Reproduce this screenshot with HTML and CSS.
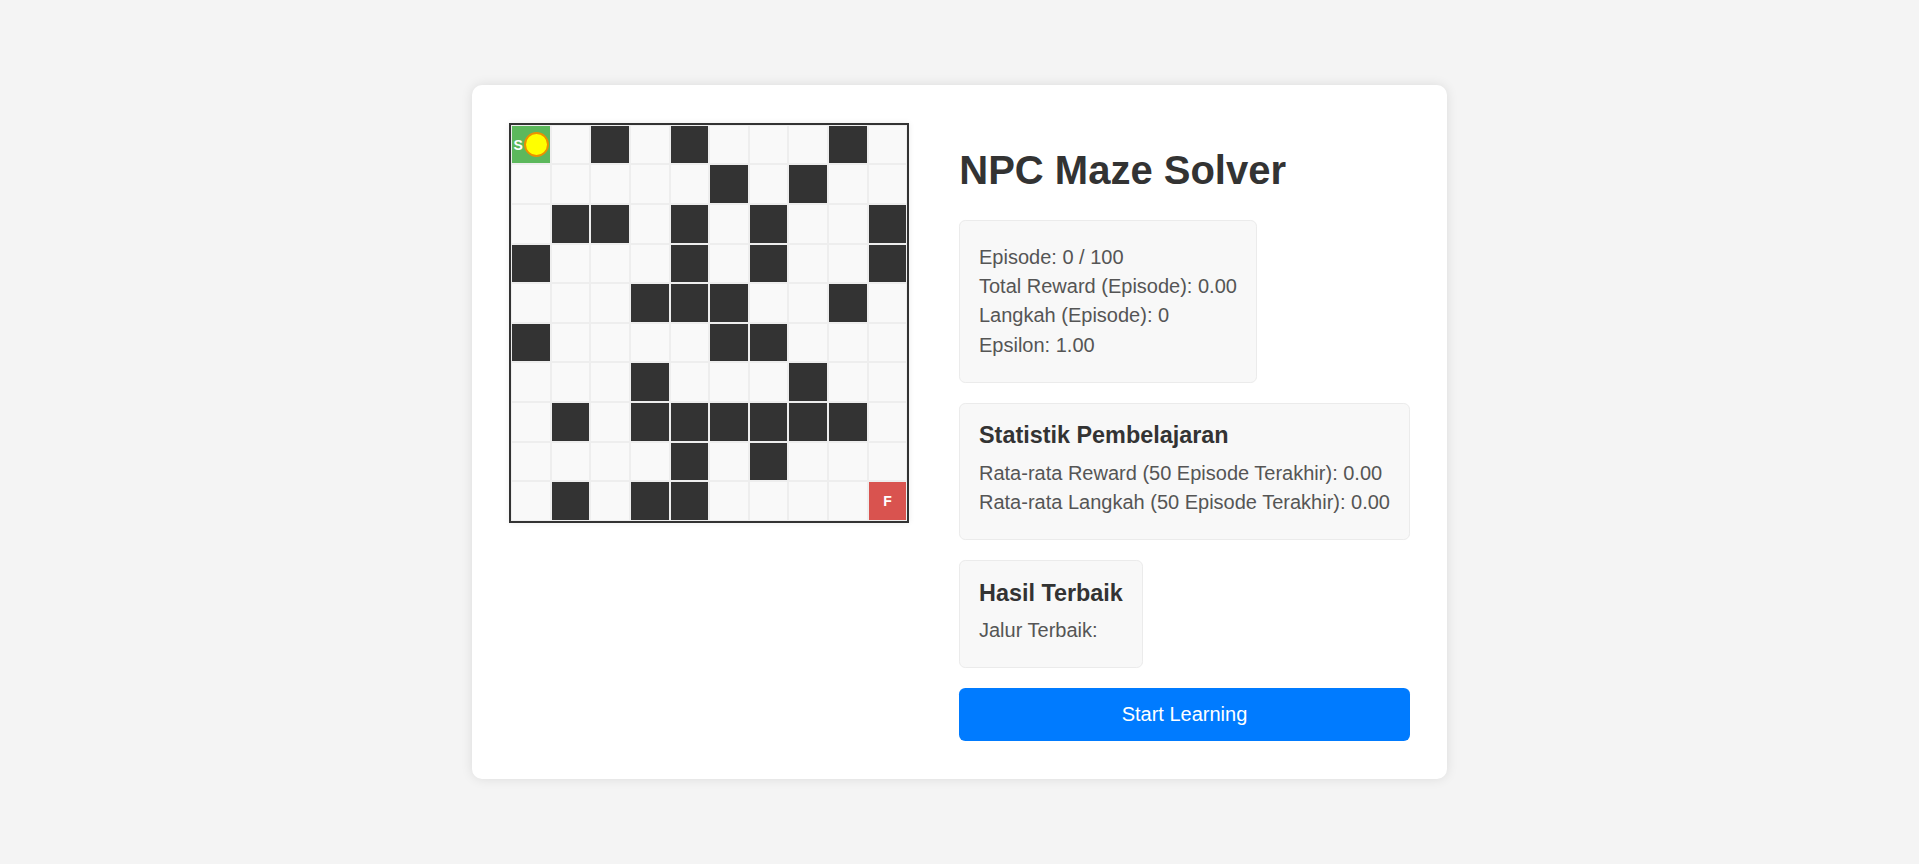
FILE: index.html
```html
<!DOCTYPE html>
<html lang="id">
<head>
<meta charset="utf-8">
<title>NPC Maze Solver</title>
<link rel="stylesheet" href="styles.css">
</head>
<body>
<div class="card">
  <div class="maze">
    <div class="cell start"><span class="label">S</span><span class="agent"></span></div><div class="cell"></div><div class="cell wall"></div><div class="cell"></div><div class="cell wall"></div><div class="cell"></div><div class="cell"></div><div class="cell"></div><div class="cell wall"></div><div class="cell"></div>
    <div class="cell"></div><div class="cell"></div><div class="cell"></div><div class="cell"></div><div class="cell"></div><div class="cell wall"></div><div class="cell"></div><div class="cell wall"></div><div class="cell"></div><div class="cell"></div>
    <div class="cell"></div><div class="cell wall"></div><div class="cell wall"></div><div class="cell"></div><div class="cell wall"></div><div class="cell"></div><div class="cell wall"></div><div class="cell"></div><div class="cell"></div><div class="cell wall"></div>
    <div class="cell wall"></div><div class="cell"></div><div class="cell"></div><div class="cell"></div><div class="cell wall"></div><div class="cell"></div><div class="cell wall"></div><div class="cell"></div><div class="cell"></div><div class="cell wall"></div>
    <div class="cell"></div><div class="cell"></div><div class="cell"></div><div class="cell wall"></div><div class="cell wall"></div><div class="cell wall"></div><div class="cell"></div><div class="cell"></div><div class="cell wall"></div><div class="cell"></div>
    <div class="cell wall"></div><div class="cell"></div><div class="cell"></div><div class="cell"></div><div class="cell"></div><div class="cell wall"></div><div class="cell wall"></div><div class="cell"></div><div class="cell"></div><div class="cell"></div>
    <div class="cell"></div><div class="cell"></div><div class="cell"></div><div class="cell wall"></div><div class="cell"></div><div class="cell"></div><div class="cell"></div><div class="cell wall"></div><div class="cell"></div><div class="cell"></div>
    <div class="cell"></div><div class="cell wall"></div><div class="cell"></div><div class="cell wall"></div><div class="cell wall"></div><div class="cell wall"></div><div class="cell wall"></div><div class="cell wall"></div><div class="cell wall"></div><div class="cell"></div>
    <div class="cell"></div><div class="cell"></div><div class="cell"></div><div class="cell"></div><div class="cell wall"></div><div class="cell"></div><div class="cell wall"></div><div class="cell"></div><div class="cell"></div><div class="cell"></div>
    <div class="cell"></div><div class="cell wall"></div><div class="cell"></div><div class="cell wall"></div><div class="cell wall"></div><div class="cell"></div><div class="cell"></div><div class="cell"></div><div class="cell"></div><div class="cell finish"><span class="label">F</span></div>
  </div>
  <div class="panel">
    <h1 class="title">NPC Maze Solver</h1>
    <div class="box">
      <p class="line">Episode: 0 / 100</p>
      <p class="line">Total Reward (Episode): 0.00</p>
      <p class="line">Langkah (Episode): 0</p>
      <p class="line">Epsilon: 1.00</p>
    </div>
    <div class="box">
      <h3 class="box-title">Statistik Pembelajaran</h3>
      <p class="line">Rata-rata Reward (50 Episode Terakhir): 0.00</p>
      <p class="line">Rata-rata Langkah (50 Episode Terakhir): 0.00</p>
    </div>
    <div class="box">
      <h3 class="box-title">Hasil Terbaik</h3>
      <p class="line">Jalur Terbaik:</p>
    </div>
    <button class="start-btn">Start Learning</button>
  </div>
</div>
</body>
</html>
```

FILE: styles.css
```css
* { box-sizing: border-box; }

html, body {
  height: 100%;
}

body {
  margin: 0;
  background: #f4f4f4;
  font-family: "Liberation Sans", Arial, sans-serif;
  font-size: 20px;
  color: #555;
  display: flex;
  align-items: center;
  justify-content: center;
}

.card {
  background: #fff;
  border-radius: 10px;
  box-shadow: 0 0 12px rgba(0, 0, 0, 0.1);
  padding: 37.5px;
  display: flex;
  align-items: flex-start;
  gap: 50px;
}

.maze {
  width: 400px;
  height: 400px;
  border: 2px solid #333;
  display: grid;
  grid-template-columns: repeat(10, 1fr);
  grid-template-rows: repeat(10, 1fr);
  box-shadow: 0 0 6px rgba(0, 0, 0, 0.08);
}

.cell {
  background: #f9f9f9;
  border: 1px solid #eee;
  display: flex;
  align-items: center;
  justify-content: center;
}

.cell.wall { background: #333; }
.cell.start { background: #5cb85c; }
.cell.finish { background: #d9534f; }

.label {
  color: #fff;
  font-weight: bold;
  font-size: 14px;
  line-height: 1;
}

.agent {
  width: 25px;
  height: 25px;
  border-radius: 50%;
  background: #ffff00;
  border: 2.5px solid #eb9100;
  margin-left: 1px;
}

.panel {
  display: flex;
  flex-direction: column;
  align-items: flex-start;
}

.title {
  font-size: 40px;
  color: #333;
  margin: 24px 0 27px;
  line-height: 46px;
}

.box {
  background: #f8f8f8;
  border: 1px solid #ebebeb;
  border-radius: 6.25px;
  padding: 18.75px;
  margin-bottom: 20px;
}

.box-title {
  font-size: 23.4px;
  color: #333;
  margin: 0 0 12.5px;
  line-height: 27px;
}

.line {
  margin: 6.25px 0;
  line-height: 23px;
  white-space: nowrap;
}

.start-btn {
  align-self: stretch;
  background: #007bff;
  color: #fff;
  border: none;
  border-radius: 6.25px;
  padding: 15px;
  font-family: "Liberation Sans", Arial, sans-serif;
  font-size: 20px;
  line-height: 23px;
  cursor: pointer;
}
```
